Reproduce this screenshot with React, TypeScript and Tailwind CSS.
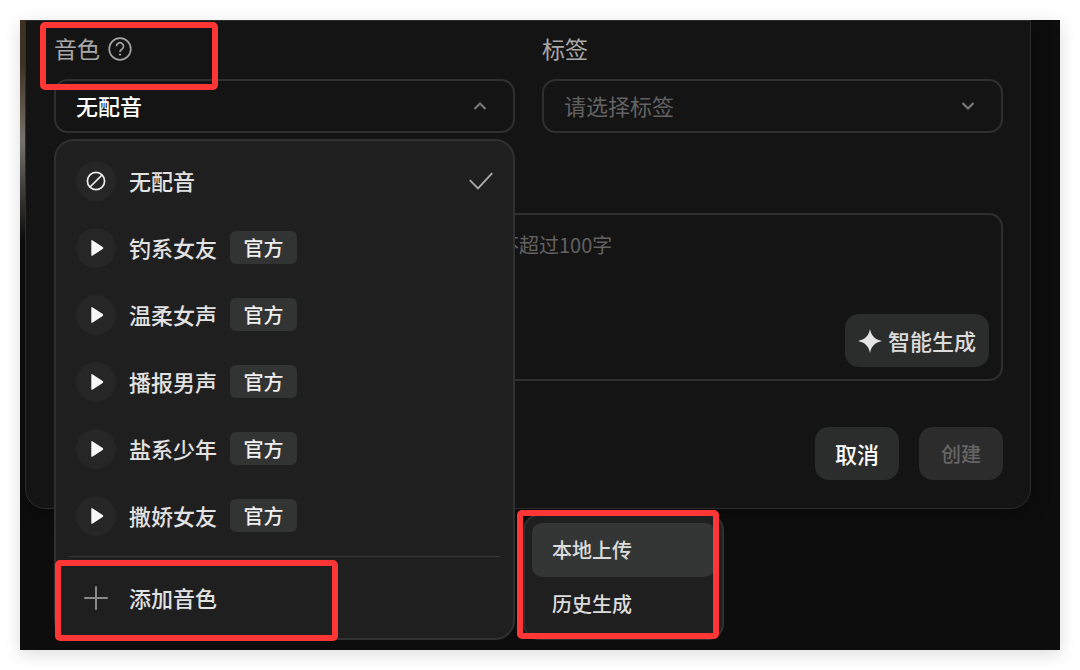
import type { ReactNode } from 'react';

const voices = ['钓系女友', '温柔女声', '播报男声', '盐系少年', '撒娇女友'];

const Chevron = ({ up = false }: { up?: boolean }) => (
  <svg
    viewBox="0 0 14 14"
    fill="none"
    stroke="#777"
    strokeWidth="2.2"
    className={`pointer-events-none absolute right-7 top-5 size-3.5 ${up ? 'rotate-180' : ''}`}
  >
    <path d="M1.5 4 7 9.5 12.5 4" />
  </svg>
);

const HelpIcon = () => (
  <svg viewBox="0 0 24 24" fill="none" stroke="#a3a3a3" strokeWidth="1.7" className="size-6">
    <circle cx="12" cy="12" r="10.8" />
    <path d="M8.5 9.3a3.5 3.5 0 1 1 5.4 2.9c-1.2.8-1.9 1.4-1.9 2.7" />
    <circle cx="12" cy="17.6" r="1.1" fill="#a3a3a3" stroke="none" />
  </svg>
);

const NoneIcon = () => (
  <svg viewBox="0 0 20 20" fill="none" stroke="#eee" strokeWidth="1.7" className="size-5">
    <circle cx="10" cy="10" r="8.6" />
    <path d="M4 16 16 4" />
  </svg>
);

const PlayIcon = () => (
  <svg viewBox="0 0 20 20" fill="#f7f7f7" className="size-5">
    <path d="M5.3 3.2Q5.3 1.4 6.7 2.4L16.7 9.1q1.2.9 0 1.800L6.700 17.600Q5.300 18.600 5.300 16.800Z" />
  </svg>
);

const CheckIcon = () => (
  <svg viewBox="0 0 24 24" fill="none" stroke="#aaa" strokeWidth="1.9" className="size-6">
    <path d="M.8 11.2 9 19.4 23.2 4.2" />
  </svg>
);

const PlusIcon = () => (
  <svg viewBox="0 0 24 24" fill="none" stroke="#8a8a8a" strokeWidth="2" strokeLinecap="round" className="size-6">
    <path d="M12 1v22M1 12h22" />
  </svg>
);

const SparkIcon = () => (
  <svg viewBox="0 0 24 24" fill="#e4e4e4" className="size-6">
    <path d="M12 0C13.4 7 17 10.6 24 12 17 13.4 13.4 17 12 24 10.6 17 7 13.4 0 12 7 10.6 10.6 7 12 0Z" />
  </svg>
);

// Red frame drawn over the part that it is placed in
const Highlight = ({ className }: { className: string }) => (
  <div className={`pointer-events-none absolute z-30 rounded-[5px] border-6 border-[#fe3636] ${className}`} />
);

const Option = ({ icon, children, round = true }: { icon: ReactNode; children: ReactNode; round?: boolean }) => (
  <button type="button" className="flex h-[67px] w-full items-center px-5 text-[22px] text-[#e2e2e2]">
    <span className={`mr-[13px] flex size-10 shrink-0 items-center justify-center rounded-full ${round ? 'bg-[#262626]' : ''}`}>
      {icon}
    </span>
    {children}
  </button>
);

const UploadMenu = () => (
  <div className="absolute -bottom-0.5 left-full z-20 ml-2.5 w-[201px] rounded-2xl border-2 border-[#303030] bg-[#1f1f1f] p-[7px] text-[20px] text-[#dcdcdc]">
    <button type="button" className="flex h-[54px] w-full items-center rounded-[10px] bg-[#343635] px-5">
      本地上传
    </button>
    <button type="button" className="flex h-[54px] w-full items-center rounded-[10px] px-5">
      历史生成
    </button>
    <Highlight className="-bottom-px -left-2 -top-1.5 right-[3px]" />
  </div>
);

const VoiceMenu = () => (
  <div className="absolute inset-x-0 top-full z-10 mt-1.5 rounded-[20px] border-2 border-[#303030] bg-[#1f1f1f] pb-[7px] pt-1.5">
    <Option icon={<NoneIcon />}>
      无配音
      <span className="ml-auto">
        <CheckIcon />
      </span>
    </Option>
    {voices.map((voice) => (
      <Option key={voice} icon={<PlayIcon />}>
        {voice}
        <span className="ml-[13px] flex h-[33px] w-[67px] items-center justify-center rounded-md bg-[#323433] text-[20px] text-[#f0f0f0]">
          官方
        </span>
      </Option>
    ))}
    <hr className="mx-[13px] my-[7px] border-[#383838]" />
    <div className="relative">
      <Option icon={<PlusIcon />} round={false}>
        添加音色
      </Option>
      <Highlight className="-bottom-2.5 -left-px -top-1 w-[283px]" />
    </div>
    <UploadMenu />
  </div>
);

export default function App() {
  return (
    <div className="min-h-screen bg-white p-5 font-['Noto_Sans_CJK_SC',sans-serif] font-medium">
      <main className="flex min-h-[calc(100vh-40px)] items-start overflow-hidden bg-[#0d0d0d] pr-[29px] shadow-[0_4px_16px_rgba(0,0,0,0.14)]">
        <div className="relative z-10 h-[220px] w-[5px] shrink-0 bg-linear-to-b from-[#3f3223] from-20% via-[#77736c] via-55% to-[#0d0d0d]" />
        <form className="flex-1 rounded-b-[20px] border border-[#2d2d2d] bg-[#141414] pb-7 pl-7 pr-[27px] pt-3 shadow-[0_4px_20px_rgba(0,0,0,0.3)]">
          <div className="grid grid-cols-2 gap-[27px]">
            <div>
              <div className="relative mb-3.5 flex h-8 items-center gap-2">
                <label htmlFor="voice" className="pb-0.5 text-[23px] font-normal text-[#a8a8a8]">
                  音色
                </label>
                <HelpIcon />
                <Highlight className="-bottom-[25px] -left-3.5 -top-[11px] w-[178px]" />
              </div>
              <div className="relative">
                <select
                  id="voice"
                  className="block h-[54px] w-full appearance-none rounded-[14px] border-2 border-[#303030] bg-transparent px-5 pb-0.5 text-[22px] text-white"
                >
                  <option>无配音</option>
                </select>
                <Chevron up />
                <VoiceMenu />
              </div>
            </div>
            <div>
              <div className="mb-3.5 flex h-8 items-center">
                <label htmlFor="tags" className="pb-0.5 text-[23px] font-normal text-[#a8a8a8]">
                  标签
                </label>
              </div>
              <div className="relative">
                <select
                  id="tags"
                  className="block h-[54px] w-full appearance-none rounded-[14px] border-2 border-[#303030] bg-transparent px-5 pb-0.5 text-[22px] font-normal text-[#626262]"
                >
                  <option>请选择标签</option>
                </select>
                <Chevron />
              </div>
            </div>
          </div>

          <div className="relative mt-20">
            <textarea
              aria-label="不超过100字"
              placeholder="不超过100字"
              className="block h-[168px] w-full resize-none rounded-[14px] border-2 border-[#303030] bg-transparent px-5 py-3.5 indent-[423px] text-[20px] leading-8 font-normal text-white placeholder:text-[#626262]"
            />
            <button
              type="button"
              className="absolute bottom-3.5 right-3.5 flex h-[53px] items-center gap-1.5 rounded-[14px] bg-[#2b2d2c] px-[13px] text-[22px] text-[#dcdcdc]"
            >
              <SparkIcon />
              智能生成
            </button>
          </div>

          <div className="mt-[46px] flex justify-end gap-5">
            <button type="button" className="h-[53px] w-[84px] rounded-[14px] bg-[#2b2d2c] text-[22px] text-white">
              取消
            </button>
            <button type="submit" disabled className="h-[53px] w-[84px] rounded-[14px] bg-[#2c2c2c] text-[20px] text-[#666]">
              创建
            </button>
          </div>
        </form>
      </main>
    </div>
  );
}
